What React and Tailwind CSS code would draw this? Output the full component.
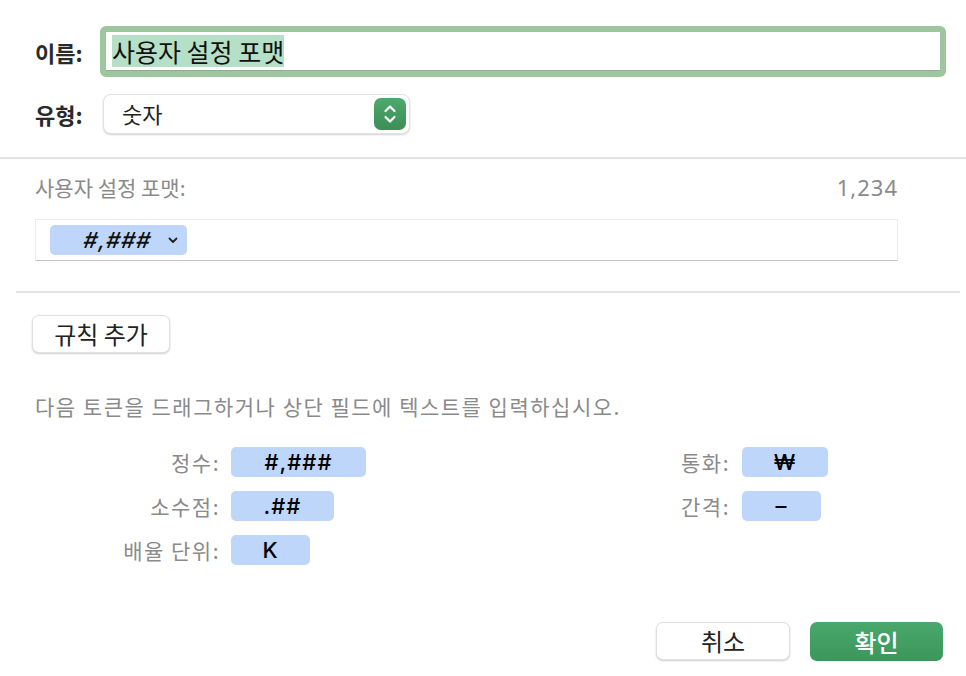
import React from "react";

function Stepper() {
  return (
    <div className="w-[32px] h-[32px] rounded-[7px] bg-gradient-to-b from-[#4ea86c] to-[#3c8f57] flex items-center justify-center">
      <svg width="14" height="22" viewBox="0 0 14 22" fill="none" stroke="white" strokeWidth="2.2" strokeLinecap="round" strokeLinejoin="round">
        <path d="M2.5 8 L7 3.5 L11.5 8" />
        <path d="M2.5 14 L7 18.5 L11.5 14" />
      </svg>
    </div>
  );
}

function Chip({ w, children }) {
  return (
    <div className={`${w} h-[30px] rounded-[5px] bg-[#bfd6fb] flex items-center justify-center font-['Inter',sans-serif] text-[22px] leading-none text-black font-medium tracking-[1px]`}>
      {children}
    </div>
  );
}

export default function App() {
  return (
    <div className="w-[966px] h-[676px] bg-white font-['Noto_Sans_CJK_KR','Noto_Sans',sans-serif] text-[#222] overflow-hidden">
      {/* Row 1: name */}
      <div className="flex items-center pt-[26px]">
        <div className="w-[100px] pl-[35px] text-[22px] font-bold leading-none text-[#2a2a2a]">이름:</div>
        <div className="w-[846px] h-[51px] rounded-[6px] border-[6px] border-[#9ec69e] bg-white flex items-center">
          <div className="w-full h-full border-b border-[#8fb08f] flex items-center pl-[6px]">
            <span className="bg-[#b5dfc7] text-[25px] leading-[32px] text-[#111]">사용자 설정 포맷</span>
          </div>
        </div>
      </div>

      {/* Row 2: type */}
      <div className="flex items-center mt-[17px]">
        <div className="w-[103px] pl-[35px] text-[22px] font-bold leading-none text-[#2a2a2a]">유형:</div>
        <div className="w-[307px] h-[40px] rounded-[8px] bg-white border border-[#e2e2e2] shadow-[0_1px_2px_rgba(0,0,0,0.18)] flex items-center justify-between pl-[18px] pr-[3px]">
          <span className="text-[22px] leading-none text-[#222] -mt-[2px]">숫자</span>
          <Stepper />
        </div>
      </div>

      {/* Divider */}
      <div className="mt-[23px] h-[2px] bg-[#e4e4e4]" />

      {/* Custom format section */}
      <div className="mt-[16px] pl-[35px] pr-[68px]">
        <div className="flex items-center justify-between h-[24px] text-[21px] leading-none text-[#8a8a8a]">
          <span>사용자 설정 포맷:</span>
          <span className="font-['Noto_Sans',sans-serif] text-[22px] tracking-[1px]">1,234</span>
        </div>
        <div className="mt-[20px] h-[42px] border border-[#ececec] border-b-[#c6c6c6] flex items-center pl-[14px]">
          <div className="w-[137px] h-[30px] rounded-[5px] bg-[#bfd6fb] flex items-center justify-end pr-[9px] gap-[16px]">
            <span className="inline-block -skew-x-12 font-['Inter',sans-serif] text-[22px] leading-none font-medium tracking-[1px] text-[#111]">#,###</span>
            <svg width="10" height="7" viewBox="0 0 10 7" fill="none" stroke="#222" strokeWidth="1.8" strokeLinecap="round" strokeLinejoin="round">
              <path d="M1.5 1.5 L5 5 L8.5 1.5" />
            </svg>
          </div>
        </div>
      </div>

      {/* Divider 2 */}
      <div className="mt-[30px] ml-[16px] mr-[6px] h-[2px] bg-[#e4e4e4]" />

      {/* Add rule button */}
      <div className="mt-[22px] pl-[32px]">
        <button className="w-[138px] h-[38px] rounded-[7px] bg-white border border-[#e0e0e0] shadow-[0_1px_2px_rgba(0,0,0,0.2)] text-[24px] leading-none text-[#222] flex items-center justify-center">
          규칙 추가
        </button>
      </div>

      {/* Instruction */}
      <div className="mt-[41px] pl-[35px] h-[24px] flex items-center text-[21px] tracking-[1.5px] leading-none text-[#8a8a8a]">
        다음 토큰을 드래그하거나 상단 필드에 텍스트를 입력하십시오.
      </div>

      {/* Tokens grid */}
      <div className="mt-[29px] flex">
        <div className="w-[220px] flex flex-col gap-[14px] items-end text-[21px] tracking-[1.5px] text-[#8a8a8a]">
          <div className="h-[30px] flex items-center leading-none">정수:</div>
          <div className="h-[30px] flex items-center leading-none">소수점:</div>
          <div className="h-[30px] flex items-center leading-none">배율 단위:</div>
        </div>
        <div className="ml-[11px] w-[369px] flex flex-col gap-[14px]">
          <Chip w="w-[135px]">#,###</Chip>
          <Chip w="w-[103px]">.##</Chip>
          <Chip w="w-[79px]">K</Chip>
        </div>
        <div className="w-[130px] flex flex-col gap-[14px] items-end text-[21px] tracking-[1.5px] text-[#8a8a8a]">
          <div className="h-[30px] flex items-center leading-none">통화:</div>
          <div className="h-[30px] flex items-center leading-none">간격:</div>
        </div>
        <div className="ml-[12px] flex flex-col gap-[14px]">
          <Chip w="w-[86px]">₩</Chip>
          <Chip w="w-[79px]">–</Chip>
        </div>
      </div>

      {/* Bottom buttons */}
      <div className="mt-[57px] flex justify-end gap-[20px] pr-[23px]">
        <button className="w-[134px] h-[38px] rounded-[7px] bg-white border border-[#e0e0e0] shadow-[0_1px_2px_rgba(0,0,0,0.2)] text-[24px] leading-none text-[#222] flex items-center justify-center">
          취소
        </button>
        <button className="w-[133px] h-[39px] rounded-[7px] bg-gradient-to-b from-[#4aa86c] to-[#3b965a] text-[24px] leading-none text-white font-medium flex items-center justify-center">
          확인
        </button>
      </div>
    </div>
  );
}
